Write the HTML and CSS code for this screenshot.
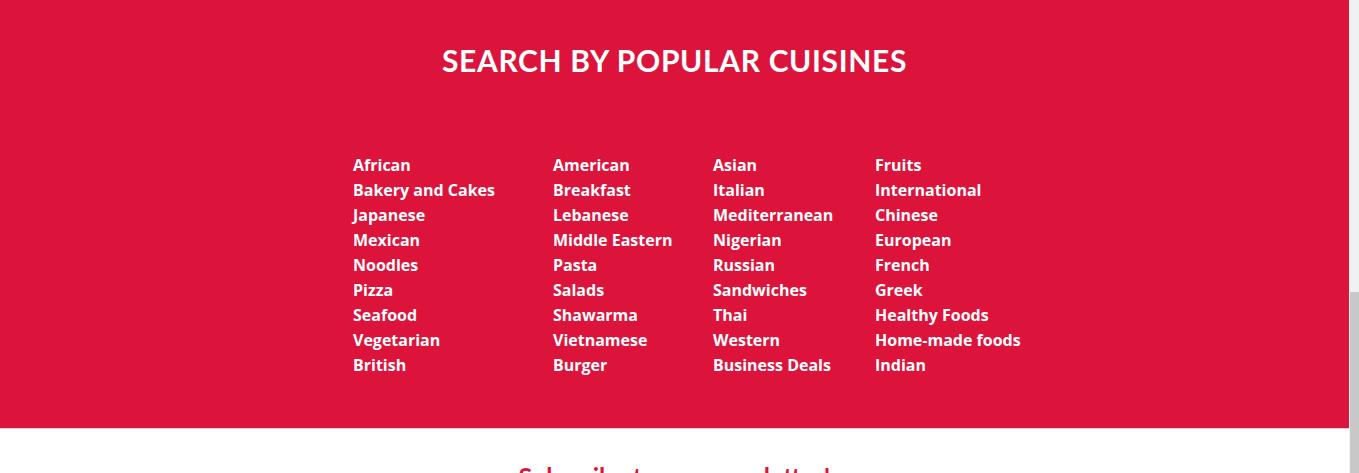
FILE: index.html
```html
<!DOCTYPE html>
<html lang="en">
<head>
<meta charset="utf-8">
<title>Search by popular cuisines</title>
<link rel="stylesheet" href="styles.css">
</head>
<body>
<div class="page">
  <main class="content">
    <section class="cuisines">
      <h2 class="cuisines-title">SEARCH BY POPULAR CUISINES</h2>
      <div class="cuisine-grid">
        <ul class="col">
          <li><a href="#">African</a></li>
          <li><a href="#">Bakery and Cakes</a></li>
          <li><a href="#">Japanese</a></li>
          <li><a href="#">Mexican</a></li>
          <li><a href="#">Noodles</a></li>
          <li><a href="#">Pizza</a></li>
          <li><a href="#">Seafood</a></li>
          <li><a href="#">Vegetarian</a></li>
          <li><a href="#">British</a></li>
        </ul>
        <ul class="col">
          <li><a href="#">American</a></li>
          <li><a href="#">Breakfast</a></li>
          <li><a href="#">Lebanese</a></li>
          <li><a href="#">Middle Eastern</a></li>
          <li><a href="#">Pasta</a></li>
          <li><a href="#">Salads</a></li>
          <li><a href="#">Shawarma</a></li>
          <li><a href="#">Vietnamese</a></li>
          <li><a href="#">Burger</a></li>
        </ul>
        <ul class="col">
          <li><a href="#">Asian</a></li>
          <li><a href="#">Italian</a></li>
          <li><a href="#">Mediterranean</a></li>
          <li><a href="#">Nigerian</a></li>
          <li><a href="#">Russian</a></li>
          <li><a href="#">Sandwiches</a></li>
          <li><a href="#">Thai</a></li>
          <li><a href="#">Western</a></li>
          <li><a href="#">Business Deals</a></li>
        </ul>
        <ul class="col">
          <li><a href="#">Fruits</a></li>
          <li><a href="#">International</a></li>
          <li><a href="#">Chinese</a></li>
          <li><a href="#">European</a></li>
          <li><a href="#">French</a></li>
          <li><a href="#">Greek</a></li>
          <li><a href="#">Healthy Foods</a></li>
          <li><a href="#">Home-made foods</a></li>
          <li><a href="#">Indian</a></li>
        </ul>
      </div>
    </section>
    <section class="newsletter">
      <h3 class="newsletter-title">Subscribe to our newsletter!</h3>
    </section>
  </main>
  <div class="scrollbar"><div class="thumb"></div></div>
</div>
</body>
</html>
```

FILE: styles.css
```css
* { box-sizing: border-box; }
html, body { margin: 0; padding: 0; height: 100%; overflow: hidden; }
body {
  font-family: "Century Gothic", "Lato", "DejaVu Sans", sans-serif;
  background: #ffffff;
}
.page {
  display: flex;
  height: 473px;
}
.content {
  flex: 1;
  min-width: 0;
  overflow: hidden;
}
.cuisines {
  background: #dc143c;
  height: 429px;
  border-bottom: 1px solid #cfcfcf;
  padding-top: 40px;
}
.cuisines-title {
  margin: 0;
  text-align: center;
  color: #ffffff;
  font-size: 30px;
  font-weight: 700;
  line-height: 40px;
  letter-spacing: 0.65px;
}
.cuisine-grid {
  display: grid;
  grid-template-columns: 200px 160px 162px 121px;
  justify-content: center;
  margin-top: 73px;
}
.col {
  list-style: none;
  margin: 0;
  padding: 0;
}
.col li {
  font-family: "Open Sans", "Lato", sans-serif;
  line-height: 25px;
  font-size: 16px;
  font-weight: 700;
  white-space: nowrap;
}
.col a {
  color: #ffffff;
  text-decoration: none;
}
.newsletter {
  padding-top: 32px;
  text-align: center;
}
.newsletter-title {
  margin: 0;
  color: #dc143c;
  font-size: 25px;
  font-weight: 700;
  line-height: 30px;
}
.scrollbar {
  width: 10px;
  flex: none;
  background: #f1f1f1;
  display: flex;
  flex-direction: column;
  padding-top: 292px;
  padding-left: 1px;
}
.thumb {
  flex: 1;
  background: #c8c8c8;
}
```
